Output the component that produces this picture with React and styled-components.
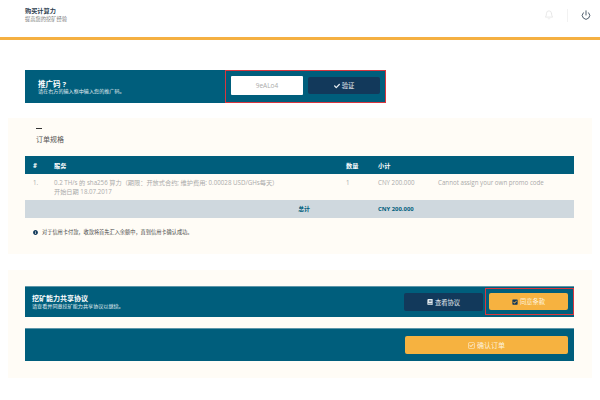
import styled, { createGlobalStyle } from "styled-components";
import { FaCheck, FaBook, FaRegCheckSquare, FaCheckSquare, FaInfoCircle } from "react-icons/fa";
import { FiBell, FiPower } from "react-icons/fi";

const GlobalStyle = createGlobalStyle`
    html, body {
        margin: 0;
        padding: 0;
        background: #fff;
    }
    body {
        width: 600px;
        height: 400px;
        overflow: hidden;
        font-family: "Open Sans", "Noto Sans CJK SC", sans-serif;
    }
`;

const Header = styled.header`
    display: flex;
    justify-content: space-between;
    align-items: center;
    box-sizing: border-box;
    height: 40px;
    padding: 0 9px 7px 25px;
    border-bottom: 3px solid #f5b041;
`;

const PageTitle = styled.div`
    font-size: 6.2px;
    line-height: 9px;
    font-weight: 700;
    color: #2c3e50;
`;

const PageSub = styled.div`
    font-size: 5.25px;
    line-height: 9px;
    color: #777;
`;

const HeaderIcons = styled.div`
    display: flex;
    align-items: center;
    gap: 13px;
`;

const Divider = styled.span`
    width: 1px;
    height: 13px;
    background: #f2f2f2;
`;

const Main = styled.main`
    display: flex;
    flex-direction: column;
    padding: 30px 8px 0;
`;

const PromoBar = styled.section`
    display: flex;
    align-items: stretch;
    width: 361px;
    height: 33px;
    margin-left: 17px;
    margin-bottom: 15px;
    background: #005e7c;
`;

const BarText = styled.div`
    display: flex;
    flex: 1;
    flex-direction: column;
    justify-content: center;
    padding-left: ${(p) => p.$pad || 13}px;
    color: #fff;
`;

const BarTitle = styled.div`
    font-size: ${(p) => p.$size || 7}px;
    line-height: 8px;
    font-weight: 700;
`;

const BarSub = styled.div`
    font-size: 5.1px;
    line-height: 6px;
    color: #e3eef2;
`;

const PromoHighlight = styled.div`
    display: flex;
    align-items: center;
    box-sizing: border-box;
    gap: 5px;
    padding: 0 5px 2px;
    border: 1px solid #d9363e;
`;

const AgreeHighlight = styled.div`
    display: flex;
    align-items: center;
    box-sizing: border-box;
    width: 89px;
    height: 27px;
    margin: 0 0 1px 2px;
    padding-left: 3px;
    border: 1px solid #d9363e;
`;

const CodeBox = styled.div`
    display: flex;
    align-items: center;
    justify-content: center;
    width: 72px;
    height: 19px;
    border-radius: 1px;
    background: #fff;
    color: #aaa;
    font-size: 6.5px;
`;

const Button = styled.div`
    display: flex;
    align-items: center;
    justify-content: center;
    gap: 2px;
    width: ${(p) => p.$w}px;
    height: ${(p) => p.$h}px;
    border-radius: 2px;
    background: ${(p) => (p.$orange ? "#f6b240" : "#12395b")};
    color: ${(p) => (p.$orange ? "#fdf3df" : "#e8eef2")};
    font-size: ${(p) => p.$size || 6.3}px;
`;

const Card = styled.section`
    display: flex;
    flex-direction: column;
    box-sizing: border-box;
    height: ${(p) => p.$h}px;
    margin-bottom: 16px;
    padding: ${(p) => p.$pt}px 18px 0 17px;
    background: #fffcf6;
`;

const SectionHead = styled.div`
    margin: 0 0 11px 11px;
    color: #555;
    font-size: 7px;
    line-height: 11px;
`;

const Dash = styled.div`
    width: 6px;
    height: 1px;
    margin: 0 0 5px 11px;
    background: #333;
`;

const Row = styled.div`
    display: grid;
    grid-template-columns: 29px 292px 32px 60px 1fr;
    align-items: ${(p) => (p.$top ? "start" : "center")};
    box-sizing: border-box;
    height: ${(p) => p.$h}px;
    padding-top: ${(p) => (p.$top ? 4 : 0)}px;
    background: ${(p) => p.$bg || "transparent"};
    color: ${(p) => p.$color || "#aaa"};
    font-size: ${(p) => p.$size || 6.2}px;
    font-weight: ${(p) => (p.$bold ? 700 : 400)};
    line-height: 9px;
`;

const NumCell = styled.div`
    padding-left: 8px;
`;

const TotalLabel = styled.div`
    grid-column: 1 / 3;
    padding-right: 36px;
    text-align: right;
`;

const TotalValue = styled.div`
    grid-column: 4 / 6;
`;

const Note = styled.div`
    display: flex;
    align-items: center;
    gap: 4px;
    margin: 10px 0 0 8px;
    color: #444;
    font-size: 5.2px;
    line-height: 8px;
`;

const Band = styled.div`
    display: flex;
    align-items: center;
    justify-content: ${(p) => (p.$end ? "flex-end" : "flex-start")};
    box-sizing: border-box;
    height: ${(p) => p.$h}px;
    margin-bottom: ${(p) => p.$mb || 0}px;
    padding-right: ${(p) => p.$pr || 0}px;
    background: #005e7c;
    border-top: 1px solid #5d96a9;
`;

export default function App() {
    return (
        <>
            <GlobalStyle />
            <Header>
                <div>
                    <PageTitle>购买计算力</PageTitle>
                    <PageSub>提高您的挖矿经验</PageSub>
                </div>
                <HeaderIcons>
                    <FiBell size={10} color="#e4e4e4" />
                    <Divider />
                    <FiPower size={10} color="#2c3e50" />
                </HeaderIcons>
            </Header>
            <Main>
                <PromoBar>
                    <BarText>
                        <BarTitle $size={7.5}>推广码 ?</BarTitle>
                        <BarSub>请在右方的输入框中输入您的推广码。</BarSub>
                    </BarText>
                    <PromoHighlight>
                        <CodeBox>9eALo4</CodeBox>
                        <Button $w={72} $h={17}>
                            <FaCheck size={6} />
                            验证
                        </Button>
                    </PromoHighlight>
                </PromoBar>
                <Card $h={136} $pt={10}>
                    <Dash />
                    <SectionHead>订单规格</SectionHead>
                    <Row $h={18} $bg="#005e7c" $color="#fff" $bold>
                        <NumCell>#</NumCell>
                        <div>服务</div>
                        <div>数量</div>
                        <div>小计</div>
                    </Row>
                    <Row $h={26} $top>
                        <NumCell>1.</NumCell>
                        <div>
                            0.2 TH/s 的 sha256 算力（期限：开放式合约; 维护费用: 0.00028 USD/GHs每天）
                            <br />
                            开始日期 18.07.2017
                        </div>
                        <div>1</div>
                        <div>CNY 200.000</div>
                        <div>Cannot assign your own promo code</div>
                    </Row>
                    <Row $h={18} $bg="#cfd8de" $color="#005e7c" $size={5.9} $bold>
                        <TotalLabel>总计</TotalLabel>
                        <TotalValue>CNY 200.000</TotalValue>
                    </Row>
                    <Note>
                        <FaInfoCircle size={5} color="#12395b" />
                        对于信用卡付款，收款将首先汇入余额中，直到信用卡确认成功。
                    </Note>
                </Card>
                <Card $h={108} $pt={16}>
                    <Band $h={31} $mb={11}>
                        <BarText $pad={7}>
                            <BarTitle>挖矿能力共享协议</BarTitle>
                            <BarSub>请查看并同意挖矿能力共享协议以继续。</BarSub>
                        </BarText>
                        <Button $w={79} $h={18}>
                            <FaBook size={6} />
                            查看协议
                        </Button>
                        <AgreeHighlight>
                            <Button $orange $w={79} $h={17}>
                                <FaCheckSquare size={6} color="#12395b" />
                                同意条款
                            </Button>
                        </AgreeHighlight>
                    </Band>
                    <Band $h={33} $pr={6} $end>
                        <Button $orange $w={163} $h={18} $size={7}>
                            <FaRegCheckSquare size={7} />
                            确认订单
                        </Button>
                    </Band>
                </Card>
            </Main>
        </>
    );
}
